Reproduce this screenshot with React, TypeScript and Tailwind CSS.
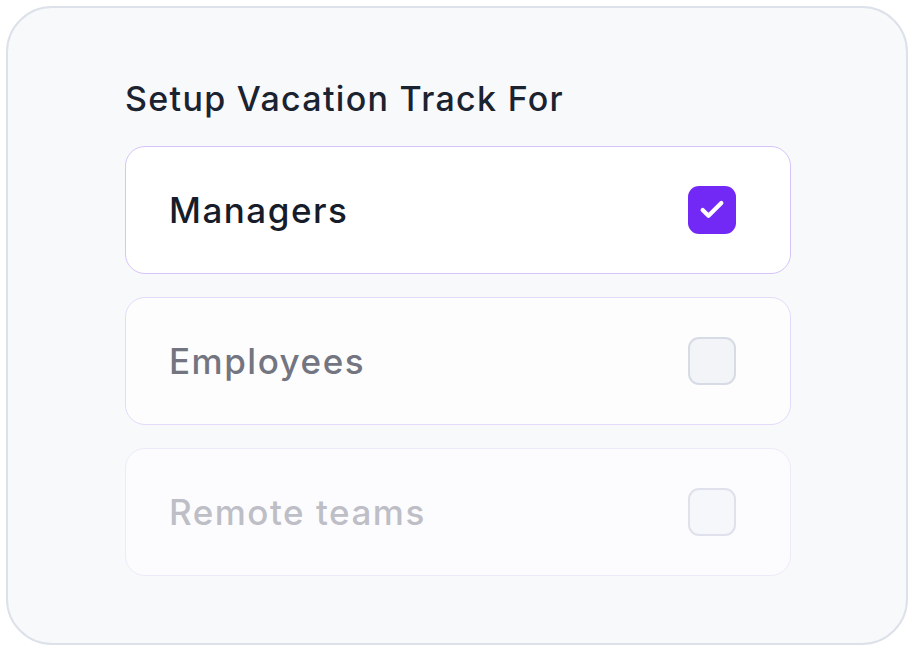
import { Check } from "lucide-react"

type Option = {
  label: string
  checked: boolean
  tone: "active" | "idle" | "muted"
}

const options: Option[] = [
  { label: "Managers", checked: true, tone: "active" },
  { label: "Employees", checked: false, tone: "idle" },
  { label: "Remote teams", checked: false, tone: "muted" },
]

function OptionRow({ option }: { option: Option }) {
  const card =
    option.tone === "active"
      ? "bg-white border-[#d6c4fb]"
      : option.tone === "idle"
        ? "bg-[#fdfdfe] border-[#e4dbfa]"
        : "bg-[#fcfcfe] border-[#eeeaf9]"
  const text =
    option.tone === "active" ? "text-[#161c29]" : option.tone === "idle" ? "text-[#737581]" : "text-[#bdbec6]"

  return (
    <div className={`flex h-[128px] w-[666px] items-center justify-between rounded-[20px] border-[1.5px] pl-[43px] pr-[54px] ${card}`}>
      <span className={`text-[35px] font-medium leading-none tracking-[1.5px] ${text}`}>{option.label}</span>
      {option.checked ? (
        <span className="flex h-[48px] w-[48px] items-center justify-center rounded-[11px] bg-[#7329f5]">
          <Check className="h-[28px] w-[28px] text-white" strokeWidth={3.6} />
        </span>
      ) : (
        <span
          className={`h-[48px] w-[48px] rounded-[11px] border-[2.5px] ${
            option.tone === "idle" ? "border-[#d6dbe5] bg-[#f3f4f8]" : "border-[#e0e1ec] bg-[#f6f7fa]"
          }`}
        />
      )}
    </div>
  )
}

export default function App() {
  return (
    <div className="h-[651px] w-[914px] bg-white p-[6px]" style={{ fontFamily: "Inter, 'Noto Sans', sans-serif" }}>
      <div className="h-full w-full rounded-[46px] border-[2.5px] border-[#dde1ea] bg-[#f8f9fb] pl-[117px] pt-[71px]">
        <h1 className="mb-[27px] text-[34px] font-medium leading-[40px] tracking-[1.3px] text-[#1b2230]">
          Setup Vacation Track For
        </h1>
        <div className="flex flex-col gap-[23px]">
          {options.map((o) => (
            <OptionRow key={o.label} option={o} />
          ))}
        </div>
      </div>
    </div>
  )
}
